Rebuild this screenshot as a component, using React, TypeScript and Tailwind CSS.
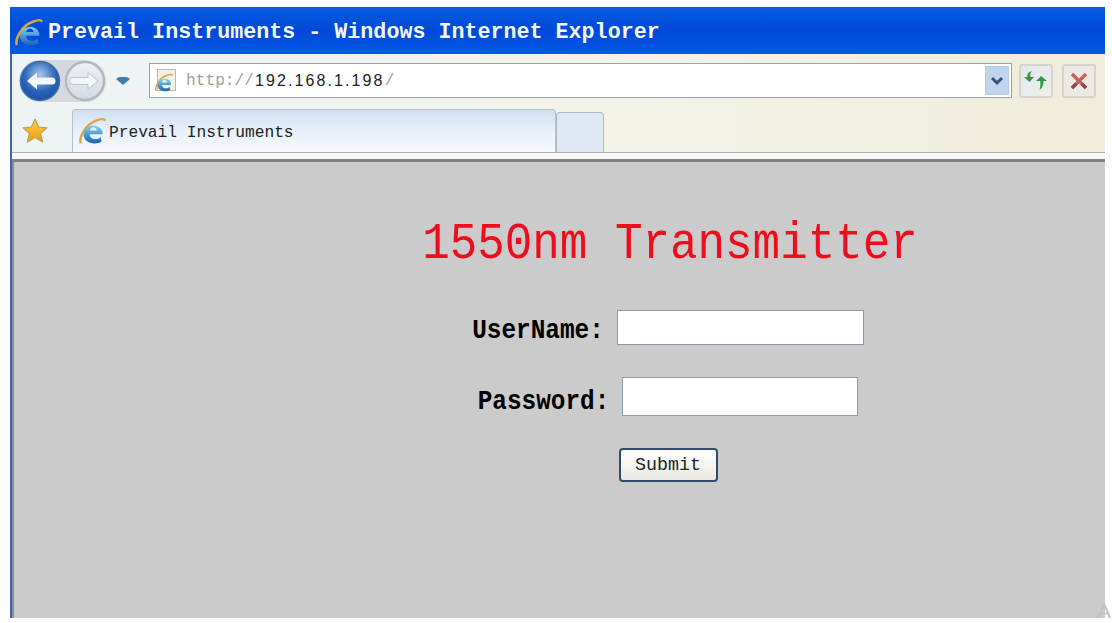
import React from 'react';

const mono = "font-['Liberation_Mono','DejaVu_Sans_Mono',monospace]";

function IeLogo({ size, gid }: { size: number; gid: string }) {
  return (
    <svg width={size} height={size} viewBox="0 0 32 32" className="shrink-0">
      <defs>
        <linearGradient id={gid} x1="0" y1="0" x2="0" y2="1">
          <stop offset="0" stopColor="#7fd0f5" />
          <stop offset="1" stopColor="#1565b5" />
        </linearGradient>
      </defs>
      <path d="M3 29C1 23 7 9 20 4c5-2 9-2 10 0" fill="none" stroke="#d9a83a" strokeWidth="2.6" />
      <path d="M6 19a11 11 0 0 1 21-3v3H13c0 6 8 7 12 3l1 5c-8 5-20 1-20-8zm7-4h8c-1-5-7-5-8 0z" fill={`url(#${gid})`} />
    </svg>
  );
}

function NavButton({ dir }: { dir: 'back' | 'forward' }) {
  if (dir === 'back') {
    return (
      <svg width="42" height="42" viewBox="0 0 42 42" className="shrink-0">
        <defs>
          <radialGradient id="backFill" cx="0.5" cy="0.35" r="0.75">
            <stop offset="0" stopColor="#a9c8ee" />
            <stop offset="0.55" stopColor="#2a63b8" />
            <stop offset="1" stopColor="#0f4c9a" />
          </radialGradient>
        </defs>
        <circle cx="21" cy="21" r="19.5" fill="url(#backFill)" stroke="#3c6ea8" strokeWidth="1.5" />
        <path d="M8 21l10-8.500v5h15a3.500 3.500 0 0 1 0 7H18v5z" fill="#f4f8fc" />
      </svg>
    );
  }
  return (
    <svg width="42" height="42" viewBox="0 0 42 42" className="shrink-0">
      <defs>
        <linearGradient id="fwdFill" x1="0" y1="0" x2="0" y2="1">
          <stop offset="0" stopColor="#eef1f5" />
          <stop offset="1" stopColor="#d3dae3" />
        </linearGradient>
      </defs>
      <circle cx="21" cy="21" r="19" fill="url(#fwdFill)" stroke="#b4b8bd" strokeWidth="2.4" />
      <path d="M34 21l-10-8.500v5H9a3.500 3.500 0 0 0 0 7h15v5z" fill="#f3f5f8" stroke="#bcc3cc" strokeWidth="1" />
    </svg>
  );
}

function PageIcon() {
  return (
    <div className="relative w-[23px] h-[24px] shrink-0">
      <div className="w-[19px] h-[22px] ml-[3px] bg-[#f3f1e4] border border-[#b9b9ac]" />
      <div className="absolute left-0 bottom-0">
        <IeLogo size={20} gid="pageIe" />
      </div>
    </div>
  );
}

function FormRow({ label, width, height, labelTop }: { label: string; width: string; height: string; labelTop: string }) {
  return (
    <div className="flex items-center gap-[13px]">
      <label className={`${mono} ${labelTop} font-bold text-[24.4px] leading-none text-black scale-y-[1.12]`}>{label}</label>
      <input className={`${width} ${height} bg-white border border-[#8f98a5] outline-none`} />
    </div>
  );
}

export default function App() {
  return (
    <div className="w-[1112px] h-[623px] bg-white overflow-hidden relative pt-[7px] pl-[10px] pr-[7px] pb-[5px]">
      <div className="h-full flex flex-col border-l-2 border-[#3f66b5]">
        {/* title bar */}
        <div className="h-[47px] -ml-[2px] pl-[4px] pt-[5px] flex items-center gap-[4px] bg-gradient-to-b from-[#0a5ce0] via-[#0048d8] to-[#0558e6] shrink-0">
          <IeLogo size={30} gid="titleIe" />
          <span className={`${mono} font-bold text-[21.7px] leading-none text-[#f4f8ff] whitespace-nowrap`}>
            Prevail Instruments - Windows Internet Explorer
          </span>
        </div>

        {/* toolbar */}
        <div className="h-[105px] shrink-0 flex flex-col bg-gradient-to-r from-[#eef3f6] via-[#f3f3ea] to-[#efecd9]">
          <div className="h-[54px] flex items-center pl-[7px] pr-[9px]">
            <div className="flex items-center rounded-full bg-[#d5d8dc]">
              <NavButton dir="back" />
              <div className="ml-[3px]">
                <NavButton dir="forward" />
              </div>
            </div>
            <svg width="16" height="10" viewBox="0 0 16 10" className="ml-[9px] shrink-0">
              <path d="M1 3l3-2h8l3 2-7 6z" fill="#3d7fa8" />
            </svg>
            <div className="ml-[18px] flex-1 h-[35px] flex items-center bg-white border border-[#9aa3ad] pl-[4px]">
              <PageIcon />
              <span className={`${mono} ml-[9px] mt-[1px] text-[16.2px] text-[#a0a0a0]`}>http://</span>
              <span className="ml-[1px] mt-[1px] text-[16px] tracking-[2.1px] text-[#222] font-['Liberation_Sans',sans-serif]">192.168.1.198</span>
              <span className={`${mono} mt-[1px] text-[16.2px] text-[#a0a0a0]`}>/</span>
              <div className="ml-auto mr-[2px] w-[24px] h-[29px] flex items-center justify-center bg-[#c2d5ef] border border-[#b4c9e6]">
                <svg width="14" height="10" viewBox="0 0 14 10">
                  <path d="M2 2l5 5 5-5" fill="none" stroke="#35517c" strokeWidth="3" />
                </svg>
              </div>
            </div>
            <div className="ml-[7px] w-[34px] h-[34px] flex items-center justify-center rounded-[3px] border-2 border-[#d5d4cc] bg-gradient-to-br from-[#dfe8f2] to-[#f0efe6]">
              <svg width="24" height="22" viewBox="0 0 24 22">
                <path d="M8 1C6 3 6 5 6.500 7H10l-4.500 5L0 7h3.500C3 5 4 2 8 1z" fill="#3f8f3f" />
                <path d="M17 6l6 5h-3.500c0 4-1 7-4 9 1-3 1-6 .8-9H12z" fill="#2f9a44" />
              </svg>
            </div>
            <div className="ml-[9px] w-[34px] h-[34px] flex items-center justify-center rounded-[3px] border-2 border-[#d5d4cc] bg-[#ece8e4]">
              <svg width="20" height="20" viewBox="0 0 20 20">
                <path d="M3 3l14 14M17 3L3 17" stroke="#c8605e" strokeWidth="3.400" />
                <path d="M7 13l-4 4M13 13l4 4" stroke="#8a4a4a" strokeWidth="3.400" />
              </svg>
            </div>
          </div>

          <div className="flex-1 flex items-start pl-[10px]">
            <svg width="26" height="26" viewBox="0 0 26 26" className="mt-[11px] shrink-0">
              <defs>
                <linearGradient id="star" x1="0" y1="0" x2="0" y2="1">
                  <stop offset="0" stopColor="#fbd24a" />
                  <stop offset="1" stopColor="#f09a12" />
                </linearGradient>
              </defs>
              <path d="M13 1l3.600 8 8.400.8-6.400 5.600 2 8.600L13 19.600 5.400 24l2-8.600L1 9.800 9.400 9z" fill="url(#star)" stroke="#b9a05a" strokeWidth="1.2" strokeLinejoin="round" />
            </svg>
            <div className="ml-[24px] mt-[2px] w-[484px] h-[43px] flex items-center gap-[2px] pl-[5px] rounded-t-[4px] border border-b-0 border-[#b7c0c8] bg-gradient-to-b from-[#cfe0f3] via-[#e8f0f9] to-[#f7f9fb]">
              <IeLogo size={29} gid="tabIe" />
              <span className={`${mono} pt-[5px] text-[16.2px] leading-none text-[#222] whitespace-nowrap`}>Prevail Instruments</span>
            </div>
            <div className="mt-[5px] w-[48px] h-[40px] rounded-t-[4px] border border-b-0 border-[#aeb9c6] bg-[#dfe8f4]" />
          </div>

          <div className="h-[7px] border-t border-[#a9b0b4] bg-[#f7f8f5] shrink-0" />
        </div>

        {/* page */}
        <main className="flex-1 bg-[#cbcbcb] border-t-[3px] border-l-2 border-[#7d7f80] border-l-[#8b9089] flex flex-col items-center pl-[217px]">
          <h1 className={`${mono} mt-[60px] ml-[4px] text-[45.9px] leading-none text-[#ee0d1c] whitespace-nowrap scale-y-[1.14]`}>
            1550nm Transmitter
          </h1>
          <div className="mt-[42px]">
            <FormRow label="UserName:" width="w-[247px]" height="h-[35px]" labelTop="mt-[8px]" />
          </div>
          <div className="mt-[32px]">
            <FormRow label="Password:" width="w-[236px]" height="h-[39px]" labelTop="mt-[12px]" />
          </div>
          <button className={`${mono} mt-[32px] w-[99px] h-[34px] text-[18.3px] leading-none text-[#222] rounded-[4px] border-2 border-[#2f4a6b] bg-gradient-to-b from-white to-[#e9e9e2]`}>
            Submit
          </button>
        </main>
      </div>
      <span className="absolute left-[1097px] top-[600px] text-[21px] leading-none text-[#c2c2c2] font-['Liberation_Sans',sans-serif]">A</span>
    </div>
  );
}
